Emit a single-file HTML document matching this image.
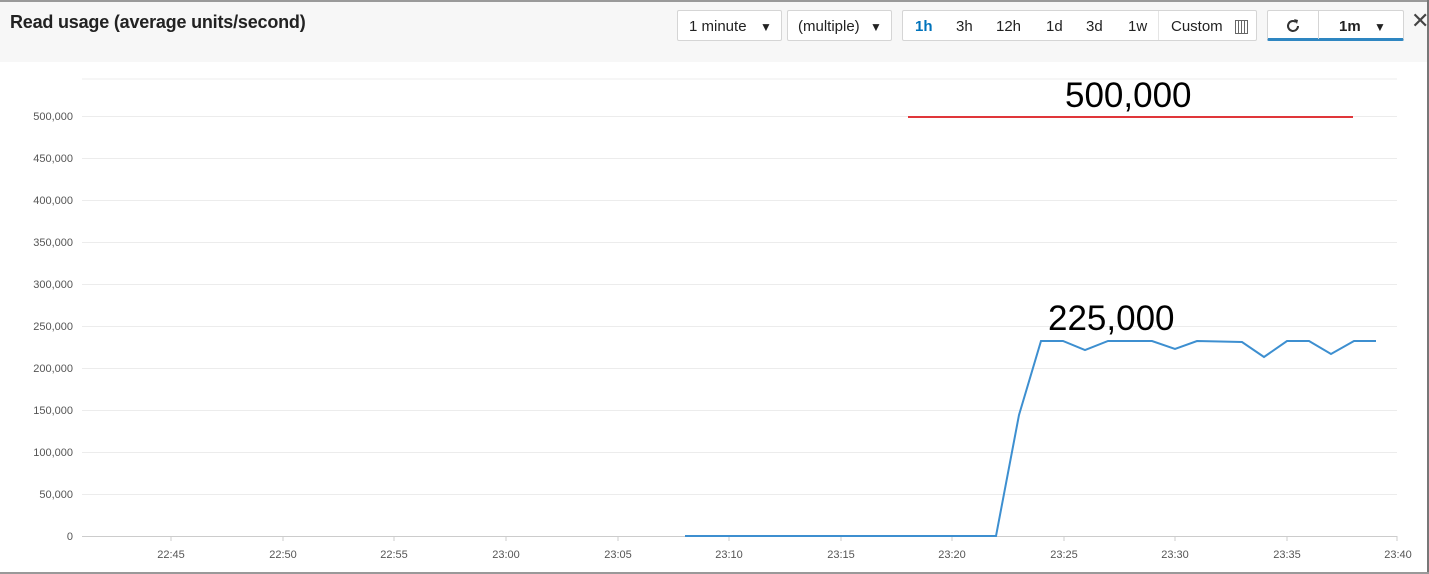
<!DOCTYPE html>
<html><head><style>
body{margin:0;width:1429px;height:574px;overflow:hidden;background:#fff;font-family:"Liberation Sans",sans-serif;position:relative}
.hdr{position:absolute;left:0;top:2px;width:1427px;height:60px;background:#f7f7f7}
.top{position:absolute;left:0;top:0;width:1429px;height:2px;background:#9a9a9a}
.rb{position:absolute;right:0;top:0;width:2px;height:574px;background:#777}
.bb{position:absolute;left:0;bottom:0;width:1429px;height:2px;background:#999}
.title{position:absolute;left:10px;top:12px;font-size:18px;font-weight:bold;color:#222;letter-spacing:-0.2px}
.box{position:absolute;top:10px;height:31px;background:#fff;border:1px solid #d5d5d5;border-radius:2px;font-size:15px;color:#222;line-height:32px;box-sizing:border-box}
.t{position:absolute;top:0}
</style></head><body>
<div class="hdr"></div><div class="top"></div>
<div class="title">Read usage (average units/second)</div>
<div class="box" style="left:677px;width:105px;padding-left:11px">1 minute <span style="position:absolute;left:82px;font-size:12px">▼</span></div>
<div class="box" style="left:787px;width:105px;padding-left:10px">(multiple) <span style="position:absolute;left:82px;font-size:12px">▼</span></div>
<div class="box" style="left:902px;width:355px">
<span class="t" style="left:12px;color:#0073bb;font-weight:bold">1h</span>
<span class="t" style="left:53px">3h</span>
<span class="t" style="left:93px">12h</span>
<span class="t" style="left:143px">1d</span>
<span class="t" style="left:183px">3d</span>
<span class="t" style="left:225px">1w</span>
<span style="position:absolute;left:255px;top:0;width:1px;height:29px;background:#e5e5e5"></span>
<span class="t" style="left:268px">Custom</span>
<span style="position:absolute;left:332px;top:9px;width:11px;height:12px;border:1px solid #666;background:repeating-linear-gradient(90deg,#fff 0 2px,#666 2px 3px)"></span>
</div>
<div class="box" style="left:1267px;width:137px;border-bottom:3px solid #2e86c1">
<span style="position:absolute;left:50px;top:0;width:1px;height:28px;background:#d5d5d5"></span>
<svg style="position:absolute;left:16px;top:6px" width="18" height="18" viewBox="0 0 18 18"><path d="M14 9a5 5 0 1 1-2-4" fill="none" stroke="#333" stroke-width="2"/><path d="M10 2l4 1-1 4z" fill="#333"/></svg>
<span class="t" style="left:71px;font-weight:bold">1m</span><span style="position:absolute;left:106px;font-size:12px">▼</span></div>
<div style="position:absolute;left:1411px;top:8px;font-size:22px;color:#444">✕</div>
<svg style="position:absolute;left:0;top:0" width="1429" height="574">
<g stroke="#ececec" stroke-width="1">
<line x1="82" x2="1397" y1="79" y2="79"/>
<line x1="82" x2="1397" y1="116.5" y2="116.5"/><line x1="82" x2="1397" y1="158.5" y2="158.5"/><line x1="82" x2="1397" y1="200.5" y2="200.5"/><line x1="82" x2="1397" y1="242.5" y2="242.5"/><line x1="82" x2="1397" y1="284.5" y2="284.5"/><line x1="82" x2="1397" y1="326.5" y2="326.5"/><line x1="82" x2="1397" y1="368.5" y2="368.5"/><line x1="82" x2="1397" y1="410.5" y2="410.5"/><line x1="82" x2="1397" y1="452.5" y2="452.5"/><line x1="82" x2="1397" y1="494.5" y2="494.5"/>
</g>
<line x1="82" x2="1397" y1="536.5" y2="536.5" stroke="#ccc"/>
<g stroke="#ccc"><line x1="171" x2="171" y1="536" y2="541"/><line x1="283" x2="283" y1="536" y2="541"/><line x1="394" x2="394" y1="536" y2="541"/><line x1="506" x2="506" y1="536" y2="541"/><line x1="618" x2="618" y1="536" y2="541"/><line x1="729" x2="729" y1="536" y2="541"/><line x1="841" x2="841" y1="536" y2="541"/><line x1="952" x2="952" y1="536" y2="541"/><line x1="1064" x2="1064" y1="536" y2="541"/><line x1="1175" x2="1175" y1="536" y2="541"/><line x1="1287" x2="1287" y1="536" y2="541"/><line x1="1397" x2="1397" y1="536" y2="541"/></g>
<g font-size="11" fill="#555" text-anchor="end" font-family="Liberation Sans">
<text x="73" y="120">500,000</text><text x="73" y="162">450,000</text><text x="73" y="204">400,000</text><text x="73" y="246">350,000</text><text x="73" y="288">300,000</text><text x="73" y="330">250,000</text><text x="73" y="372">200,000</text><text x="73" y="414">150,000</text><text x="73" y="456">100,000</text><text x="73" y="498">50,000</text><text x="73" y="540">0</text>
</g>
<g font-size="11" fill="#555" text-anchor="middle" font-family="Liberation Sans">
<text x="171" y="558">22:45</text><text x="283" y="558">22:50</text><text x="394" y="558">22:55</text><text x="506" y="558">23:00</text><text x="618" y="558">23:05</text><text x="729" y="558">23:10</text><text x="841" y="558">23:15</text><text x="952" y="558">23:20</text><text x="1064" y="558">23:25</text><text x="1175" y="558">23:30</text><text x="1287" y="558">23:35</text><text x="1398" y="558">23:40</text>
</g>
<line x1="908" x2="1353" y1="117" y2="117" stroke="#e0363a" stroke-width="2"/>
<polyline fill="none" stroke="#3d8fd0" stroke-width="2" points="685,536 996,536 1019,415 1041,341 1063,341 1085,350 1108,341 1130,341 1152,341 1175,349 1197,341 1220,341.5 1242,342 1264,357 1287,341 1309,341 1331,354 1354,341 1376,341"/>
<text x="1065" y="107" font-size="35" font-family="Liberation Sans" fill="#000">500,000</text>
<text x="1048" y="330" font-size="35" font-family="Liberation Sans" fill="#000">225,000</text>
</svg>
<div class="rb"></div><div class="bb"></div>
</body></html>
